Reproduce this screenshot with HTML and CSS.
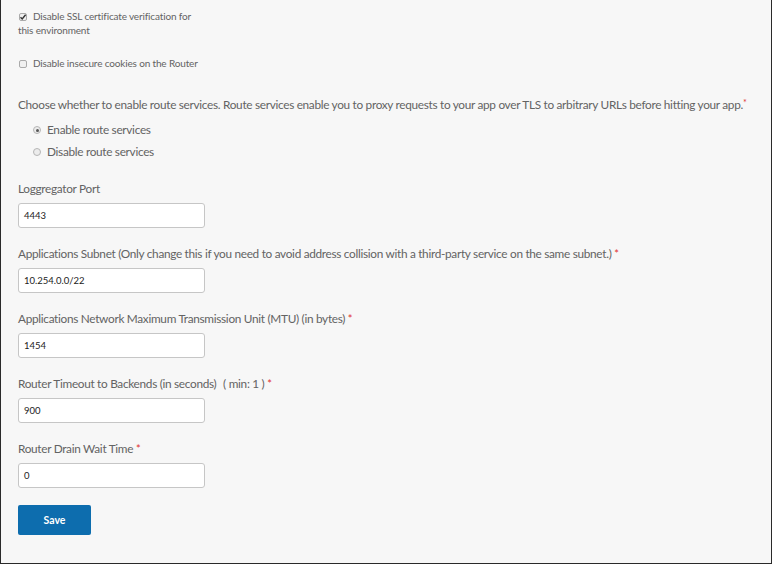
FILE: index.html
```html
<!DOCTYPE html>
<html>
<head>
<meta charset="utf-8">
<link rel="stylesheet" href="styles.css">
</head>
<body>
<div class="page">
  <div class="check-block first">
    <label class="check-label"><span class="box checked"><svg viewBox="0 0 8 8" width="8" height="8"><path d="M1.5 4.2 L3.2 5.9 L6.6 1.8" fill="none" stroke="#333" stroke-width="1.4"/></svg></span>Disable SSL certificate verification for this environment</label>
  </div>
  <div class="check-block second">
    <label class="check-label"><span class="box"></span>Disable insecure cookies on the Router</label>
  </div>

  <p class="route-text">Choose whether to enable route services. Route services enable you to proxy requests to your app over TLS to arbitrary URLs before hitting your app.<span class="req">*</span></p>
  <div class="radios">
    <div class="radio-row"><span class="radio on"></span>Enable route services</div>
    <div class="radio-row"><span class="radio"></span>Disable route services</div>
  </div>

  <div class="field">
    <div class="field-label">Loggregator Port</div>
    <div class="input">4443</div>
  </div>
  <div class="field">
    <div class="field-label">Applications Subnet (Only change this if you need to avoid address collision with a third-party service on the same subnet.) <span class="req">*</span></div>
    <div class="input">10.254.0.0/22</div>
  </div>
  <div class="field">
    <div class="field-label">Applications Network Maximum Transmission Unit (MTU) (in bytes) <span class="req">*</span></div>
    <div class="input">1454</div>
  </div>
  <div class="field">
    <div class="field-label">Router Timeout to Backends (in seconds) <span class="min">( min: 1 )</span> <span class="req">*</span></div>
    <div class="input">900</div>
  </div>
  <div class="field">
    <div class="field-label">Router Drain Wait Time <span class="req">*</span></div>
    <div class="input">0</div>
  </div>

  <button class="save">Save</button>
</div>
</body>
</html>
```
FILE: styles.css
```css
html, body {
  margin: 0;
  padding: 0;
}
body {
  background: #f7f7f7;
  font-family: Lato, "Open Sans", sans-serif;
  color: #636363;
}
.page {
  box-sizing: border-box;
  width: 772px;
  height: 564px;
  border: 1px solid #2a2a2a;
  border-top: none;
  padding: 0 0 0 17px;
}
.check-block {
  font-size: 10px;
  letter-spacing: -0.15px;
  line-height: 14px;
}
.check-block.first {
  width: 185px;
  padding-top: 9px;
}
.check-block.second {
  margin-top: 19px;
}
.box {
  display: inline-block;
  box-sizing: border-box;
  width: 8px;
  height: 8px;
  border: 1px solid #aaa;
  border-radius: 2px;
  background: #f0f0f0;
  margin: 0 6px 0 1px;
  vertical-align: -1px;
  position: relative;
}
.box svg {
  position: absolute;
  left: -1px;
  top: -1px;
}
.route-text {
  margin: 25px 0 0 0;
  font-size: 11.8px;
  letter-spacing: -0.3px;
  line-height: 16px;
  white-space: nowrap;
}
.req {
  color: #e0312f;
}
.route-text .req {
  font-size: 9px;
  vertical-align: 3px;
}
.radios {
  margin-top: 6px;
  padding-left: 15px;
}
.radio-row {
  height: 22px;
  line-height: 22px;
  font-size: 11.8px;
  letter-spacing: -0.3px;
  display: flex;
  align-items: center;
}
.radio {
  box-sizing: border-box;
  width: 8px;
  height: 8px;
  border: 1px solid #b5b5b5;
  border-radius: 50%;
  background: #ececec;
  margin-right: 6px;
  position: relative;
}
.radio.on::after {
  content: "";
  position: absolute;
  left: 1.5px;
  top: 1.5px;
  width: 3px;
  height: 3px;
  border-radius: 50%;
  background: #555;
}
.field {
  margin-top: 18px;
}
.field-label {
  font-size: 11.8px;
  letter-spacing: -0.3px;
  line-height: 16px;
}
.field-label .req {
  font-size: 11px;
}
.field-label .min {
  margin-left: 4px;
}
.input {
  box-sizing: border-box;
  margin-top: 6px;
  width: 187px;
  height: 25px;
  border: 1px solid #c6c6c6;
  border-radius: 3px;
  background: #fff;
  font-size: 9.5px;
  color: #222;
  padding-left: 5px;
  line-height: 23px;
}
.save {
  display: block;
  margin-top: 17px;
  width: 73px;
  height: 30px;
  border: none;
  border-radius: 2px;
  background: #0d6dae;
  color: #fff;
  font-family: Lato, "Open Sans", sans-serif;
  font-weight: bold;
  font-size: 10.5px;
  padding: 0;
}
```
